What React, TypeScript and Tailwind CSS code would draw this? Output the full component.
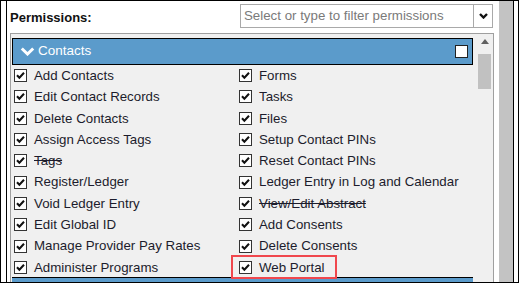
type Perm = { label: string; struck?: boolean; marked?: boolean };

const leftPerms: Perm[] = [
  { label: "Add Contacts" },
  { label: "Edit Contact Records" },
  { label: "Delete Contacts" },
  { label: "Assign Access Tags" },
  { label: "Tags", struck: true },
  { label: "Register/Ledger" },
  { label: "Void Ledger Entry" },
  { label: "Edit Global ID" },
  { label: "Manage Provider Pay Rates" },
  { label: "Administer Programs" },
];

const rightPerms: Perm[] = [
  { label: "Forms" },
  { label: "Tasks" },
  { label: "Files" },
  { label: "Setup Contact PINs" },
  { label: "Reset Contact PINs" },
  { label: "Ledger Entry in Log and Calendar" },
  { label: "View/Edit Abstract", struck: true },
  { label: "Add Consents" },
  { label: "Delete Consents" },
  { label: "Web Portal", marked: true },
];

function CheckBox() {
  return (
    <svg width="13" height="13" viewBox="0 0 13 13" className="shrink-0">
      <rect x="0.5" y="0.5" width="12" height="12" fill="#fff" stroke="#333" />
      <path d="M3 6.2 L5.4 8.8 L10 3.8" fill="none" stroke="#111" strokeWidth="2" />
    </svg>
  );
}

export default function App() {
  return (
    <div
      className="w-[519px] h-[283px] overflow-hidden bg-white border border-black pl-[5px] pr-[4px]"
      style={{ fontFamily: '"Liberation Sans", Arial, sans-serif' }}
    >
      <div className="flex h-full border-x border-black">
        <div className="flex-1 flex flex-col min-w-0">
          <div className="flex items-center justify-between h-[32px] shrink-0 pl-[3px] pr-[6px]">
            <span className="text-[13px] font-bold text-[#111] mt-[2px]">Permissions:</span>
            <div className="flex h-[24px] w-[253px] border border-[#a9a9a9] bg-white mt-[-2px]">
              <div className="flex-1 flex items-center pl-[3px] text-[13.3px] text-[#7a7a7a] whitespace-nowrap">
                Select or type to filter permissions
              </div>
              <div className="w-[19px] flex items-center justify-center border-l border-[#a9a9a9]">
                <svg width="9" height="6" viewBox="0 0 9 6">
                  <path d="M1 1 L4.5 4.5 L8 1" fill="none" stroke="#111" strokeWidth="2.4" />
                </svg>
              </div>
            </div>
          </div>
          <div className="flex-1 flex ml-[3px] mr-[5px] border-x border-t border-[#9f9f9f] bg-[#f0f0f0] min-h-0 overflow-hidden">
            <div className="w-[461px] ml-[1px] pt-[4px] flex flex-col shrink-0">
              <div className="flex items-center h-[27px] shrink-0 bg-[#5b9bcb] border border-black pl-[7px] pr-[4px]">
                <svg width="15" height="9" viewBox="0 0 15 9" className="shrink-0">
                  <path d="M1.8 1.5 L7.5 7 L13.2 1.5" fill="none" stroke="#fff" strokeWidth="3" />
                </svg>
                <span className="ml-[3px] text-[13.5px] text-white">Contacts</span>
                <div className="ml-auto w-[13px] h-[13px] bg-white border border-[#222]" />
              </div>
              <div className="flex pl-[2px] shrink-0">
                <div className="w-[225px] flex flex-col">
                  {leftPerms.map((p) => (
                    <PermRow key={p.label} perm={p} />
                  ))}
                </div>
                <div className="flex flex-col">
                  {rightPerms.map((p) => (
                    <PermRow key={p.label} perm={p} />
                  ))}
                </div>
              </div>
              <div className="h-[10px] shrink-0 bg-[#5b9bcb] border-t border-black mt-[-1px]" />
            </div>
            <div className="ml-[4px] w-[15px] flex flex-col items-center pt-[3px]">
              <svg width="8" height="5" viewBox="0 0 8 5" className="mt-[2px]">
                <path d="M0 5 L4 0 L8 5 Z" fill="#606060" />
              </svg>
              <div className="mt-[10px] w-[13px] h-[35px] bg-[#c1c1c1]" />
            </div>
          </div>
        </div>
        <div className="w-[14px] bg-[#c3c3c3]" />
      </div>
    </div>
  );
}

function PermRow({ perm }: { perm: Perm }) {
  return (
    <div className="relative flex items-center h-[21.3px] shrink-0">
      <CheckBox />
      <span
        className={`ml-[7px] text-[13.3px] leading-none text-[#1c1c2c] whitespace-nowrap ${
          perm.struck ? "line-through" : ""
        }`}
      >
        {perm.label}
      </span>
      {perm.marked && (
        <div className="absolute left-[-8px] top-[-2px] w-[106px] h-[24px] border-2 border-[#f0474d]" />
      )}
    </div>
  );
}
